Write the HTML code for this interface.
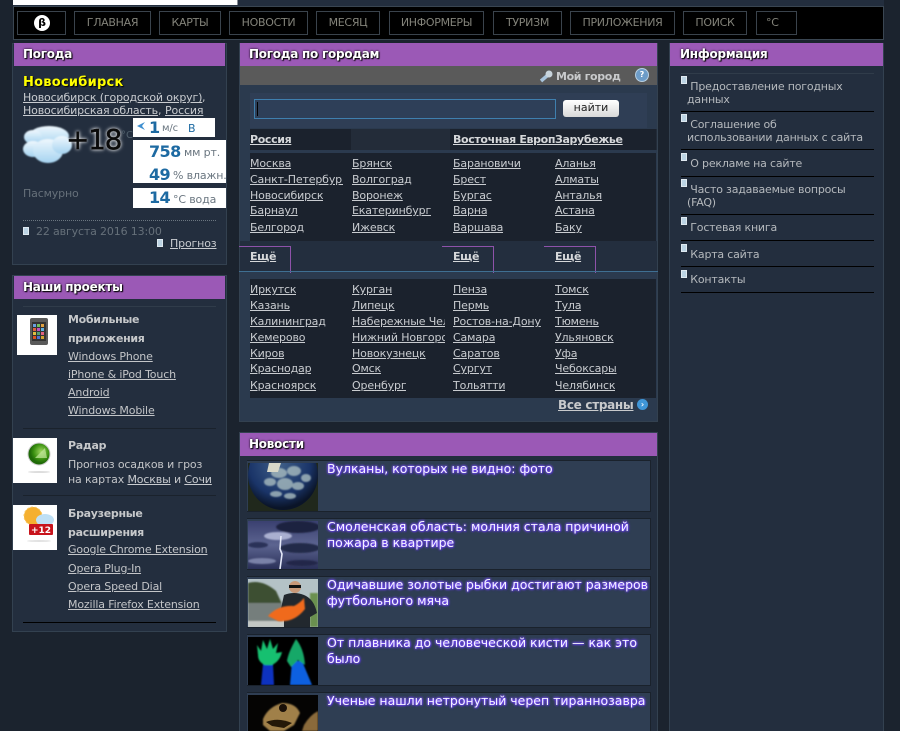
<!DOCTYPE html>
<html lang="ru"><head><meta charset="utf-8"><title>Погода</title>
<style>
html,body{margin:0;padding:0;width:900px;height:731px;overflow:hidden;background:#1b232e;}
body{position:relative;font-family:"DejaVu Sans",sans-serif;font-size:11px;color:#b9bcc0;}
div,span,a,svg{position:absolute;white-space:nowrap;}
a{color:#c9ccd0;text-decoration:underline;}
a.c{font-size:11px;letter-spacing:-.15px;line-height:16px;overflow:hidden;}
.panel{background:#232e3e;border:1px solid #334150;box-sizing:border-box;}
.h{background:#9b59b6;height:23px;color:#fff;font-weight:bold;font-size:12px;line-height:22px;padding-left:9px;box-sizing:border-box;text-shadow:1px 1px 1px #000,0 0 2px #000;letter-spacing:-.25px;}
.nav{background:#000;border:1px solid #3a434c;box-sizing:border-box;height:24px;top:11px;color:#83837a;font-size:11px;line-height:21px;text-align:center;letter-spacing:-.3px;}
.t{color:#1d6aa2;font-weight:bold;font-size:16px;letter-spacing:-.6px;}
.w{background:#fff;}
.u{color:#6a7680;font-size:11px;letter-spacing:-.15px;}
.m{width:6px;height:8px;background:#bcd4e4;border:1px solid #dfe9f0;box-sizing:border-box;}
.tab{width:52px;height:27px;top:246px;border-top:1px solid #8e52aa;border-right:1px solid #8e52aa;box-sizing:border-box;}
.hd{font-weight:bold;color:#d6d8da;text-decoration:underline;font-size:11px;letter-spacing:-.35px;}
.news{left:247px;width:404px;height:52px;background:#2f3e53;border-bottom:1px solid #1a222c;border-top:1px solid #1a222c;border-right:1px solid #1a222c;box-sizing:border-box;}
.nt{left:327px;color:#f4f2ff;font-size:12.5px;line-height:16px;letter-spacing:0;text-shadow:0 0 3px #7a4dff,0 0 2px #7a4dff,0 0 2px #7a4dff,1px 1px 1px #2a2a80;}
.l{height:1px;background:#000;}
.info{left:691px;color:#b5b9bd;font-size:11px;letter-spacing:-.2px;line-height:13px;}
.p{color:#c3c5c8;font-size:11px;letter-spacing:-.15px;}
.pb{font-weight:bold;color:#c6c8ca;font-size:11px;letter-spacing:-.3px;}
</style></head><body>

<div style="left:13px;top:0;width:871px;height:6px;background:#232e3e"></div>
<div style="left:13px;top:0;width:224px;height:5px;background:#fff"></div>
<div style="left:237px;top:0;width:1px;height:5px;background:#8a8f96"></div>
<div style="left:13px;top:6px;width:871px;height:34px;background:#000;border:1px solid #3a4652;box-sizing:border-box"></div>
<div class="nav" style="left:17px;width:49px"></div>
<div style="left:34px;top:15px;width:16px;height:16px;border-radius:50%;background:#fff;color:#000;font-size:11px;font-weight:bold;line-height:16px;text-align:center">β</div>
<div class="nav" style="left:74px;width:77px">ГЛАВНАЯ</div>
<div class="nav" style="left:159px;width:62px">КАРТЫ</div>
<div class="nav" style="left:229px;width:79px">НОВОСТИ</div>
<div class="nav" style="left:316px;width:64px">МЕСЯЦ</div>
<div class="nav" style="left:389px;width:95px">ИНФОРМЕРЫ</div>
<div class="nav" style="left:493px;width:69px">ТУРИЗМ</div>
<div class="nav" style="left:570px;width:105px">ПРИЛОЖЕНИЯ</div>
<div class="nav" style="left:683px;width:64px">ПОИСК</div>
<div class="nav" style="left:756px;width:41px;text-align:left;padding-left:9px">°C</div>

<!-- Weather panel -->
<div class="panel" style="left:12px;top:43px;width:215px;height:222px"></div>
<div class="h" style="left:14px;top:43px;width:211px">Погода</div>
<div style="left:23px;top:75px;color:#ff0;font-weight:bold;font-size:13px;letter-spacing:.25px;text-shadow:1px 1px 1px #000">Новосибирск</div>
<a style="left:23px;top:91px;font-size:11px;letter-spacing:-.15px">Новосибирск (городской округ)</a><span style="left:202px;top:91px">,</span>
<a style="left:23px;top:104px;font-size:11px;letter-spacing:-.15px">Новосибирская область</a><span style="left:158px;top:104px">,</span>
<a style="left:165px;top:104px;font-size:11px;letter-spacing:-.15px">Россия</a>
<svg style="left:22px;top:124px" width="52" height="42" viewBox="0 0 52 42"><defs><linearGradient id="cl" x1="0" y1="0" x2="0" y2="1"><stop offset="0" stop-color="#eef7fd"/><stop offset="1" stop-color="#a5d3f0"/></linearGradient><filter id="b1"><feGaussianBlur stdDeviation=".7"/></filter></defs><g fill="url(#cl)" filter="url(#b1)"><ellipse cx="27" cy="12" rx="20" ry="10"/><ellipse cx="11" cy="13" rx="9" ry="7"/><ellipse cx="11" cy="25" rx="10" ry="8"/><ellipse cx="26" cy="27" rx="15" ry="12"/><ellipse cx="40" cy="21" rx="10" ry="9"/></g></svg>
<div style="left:66px;top:119px;color:#0a0a0a;font-size:28px;line-height:42px;letter-spacing:-1.3px;-webkit-text-stroke:.4px #0a0a0a;text-shadow:0 0 3px #fff,0 0 5px rgba(255,255,255,.7)">+18</div>
<div style="left:121px;top:130px;color:#51606c;font-size:10px">°C</div>
<div class="w" style="left:133px;top:118px;width:82px;height:19px"></div>
<svg style="left:137px;top:122px" width="9" height="9"><path d="M0 4 L8 0 L5 4 L8 8 Z" fill="#3f8fd0"/></svg>
<div class="t" style="left:149px;top:118px;line-height:20px">1</div>
<div class="u" style="left:162px;top:123px;font-size:10px">м/с</div>
<div style="left:188px;top:122px;color:#1d6aa2;font-size:11px">В</div>
<div class="w" style="left:133px;top:140px;width:93px;height:43px"></div>
<div class="t" style="left:149px;top:142px;line-height:20px">758</div>
<div class="u" style="left:184px;top:146px">мм рт.</div>
<div class="t" style="left:149px;top:165px;line-height:20px">49</div>
<div class="u" style="left:173px;top:169px">% влажн.</div>
<div class="w" style="left:133px;top:188px;width:93px;height:20px"></div>
<div class="t" style="left:149px;top:188px;line-height:20px">14</div>
<div class="u" style="left:173px;top:193px">°C вода</div>
<div style="left:23px;top:187px;color:#66707a;font-size:11px;letter-spacing:-.15px">Пасмурно</div>
<div style="left:23px;top:220px;width:193px;border-top:1px dotted #6b7680"></div>
<div class="m" style="left:23px;top:227px"></div>
<div style="left:36px;top:225px;color:#66707a;font-size:11px;letter-spacing:-.15px">22 августа 2016 13:00</div>
<div class="m" style="left:157px;top:239px"></div>
<a style="left:170px;top:237px;font-size:11px;letter-spacing:-.15px">Прогноз</a>

<!-- Projects -->
<div class="panel" style="left:12px;top:275px;width:215px;height:357px"></div>
<div class="h" style="left:14px;top:276px;width:211px">Наши проекты</div>
<div class="l" style="left:23px;top:306px;width:193px;background:#303c4a"></div>
<div class="w" style="left:17px;top:315px;width:40px;height:40px"></div>
<svg style="left:17px;top:315px" width="40" height="40"><rect x="13" y="3" width="18" height="27" rx="2" fill="#5a5a5a"/><rect x="15" y="7" width="14" height="19" fill="#333"/><g><rect x="16" y="9" width="3" height="3" fill="#6aa0e0"/><rect x="20" y="9" width="3" height="3" fill="#70c060"/><rect x="24" y="9" width="3" height="3" fill="#e0a040"/><rect x="16" y="13" width="3" height="3" fill="#e06040"/><rect x="20" y="13" width="3" height="3" fill="#c050c0"/><rect x="24" y="13" width="3" height="3" fill="#60b0e0"/><rect x="16" y="17" width="3" height="3" fill="#e0c040"/><rect x="20" y="17" width="3" height="3" fill="#50a070"/><rect x="24" y="17" width="3" height="3" fill="#e06080"/><rect x="16" y="21" width="3" height="3" fill="#e05020"/><rect x="20" y="21" width="3" height="3" fill="#5070d0"/><rect x="24" y="21" width="3" height="3" fill="#d0a030"/></g></svg>
<div class="pb" style="left:68px;top:313px">Мобильные</div>
<div class="pb" style="left:68px;top:332px">приложения</div>
<a class="p" style="left:68px;top:350px">Windows Phone</a>
<a class="p" style="left:68px;top:368px">iPhone &amp; iPod Touch</a>
<a class="p" style="left:68px;top:386px">Android</a>
<a class="p" style="left:68px;top:404px">Windows Mobile</a>
<div class="l" style="left:23px;top:428px;width:193px;background:#1a222c"></div>
<div class="w" style="left:13px;top:438px;width:44px;height:45px"></div>
<svg style="left:13px;top:438px" width="44" height="45"><defs><radialGradient id="gr" cx=".6" cy=".4"><stop offset="0" stop-color="#a0d860"/><stop offset=".7" stop-color="#3a9010"/><stop offset="1" stop-color="#1f6a08"/></radialGradient></defs><circle cx="26" cy="16" r="11" fill="url(#gr)" stroke="#ccc"/><path d="M22 20 L32 10 L34 20Z" fill="#c4e8a0" opacity=".7"/><ellipse cx="26" cy="34" rx="11" ry="1" fill="#ddd"/></svg>
<div class="pb" style="left:68px;top:439px">Радар</div>
<div class="p" style="left:68px;top:458px">Прогноз осадков и гроз</div>
<div class="p" style="left:68px;top:473px">на картах <a style="position:static">Москвы</a> и <a style="position:static">Сочи</a></div>
<div class="l" style="left:23px;top:495px;width:193px;background:#1a222c"></div>
<div class="w" style="left:13px;top:505px;width:44px;height:45px"></div>
<svg style="left:13px;top:505px" width="44" height="45"><circle cx="20" cy="11" r="9" fill="#f5b030" stroke="#f8c860" stroke-dasharray="2 2"/><ellipse cx="32" cy="15" rx="9" ry="6" fill="#bfe0f5"/><rect x="16" y="19" width="24" height="11" rx="1" fill="#c8141c"/><text x="28" y="28" font-family="DejaVu Sans" font-size="9" font-weight="bold" fill="#fff" text-anchor="middle">+12</text><ellipse cx="26" cy="36" rx="12" ry="1" fill="#e2e2e2"/></svg>
<div class="pb" style="left:68px;top:507px">Браузерные</div>
<div class="pb" style="left:68px;top:526px">расширения</div>
<a class="p" style="left:68px;top:543px">Google Chrome Extension</a>
<a class="p" style="left:68px;top:562px">Opera Plug-In</a>
<a class="p" style="left:68px;top:580px">Opera Speed Dial</a>
<a class="p" style="left:68px;top:598px">Mozilla Firefox Extension</a>
<div class="l" style="left:23px;top:622px;width:193px"></div>

<!-- Cities -->
<div class="panel" style="left:239px;top:43px;width:419px;height:379px;background:#2b3a4e"></div>
<div class="h" style="left:240px;top:43px;width:417px">Погода по городам</div>
<div style="left:240px;top:66px;width:417px;height:19px;background:#5a5a5a"></div>
<svg style="left:539px;top:69px" width="15" height="15"><path d="M2 12 L9 6" stroke="#a8c4dc" stroke-width="3.5" fill="none"/><circle cx="10" cy="5" r="3.5" fill="#c8d4dc"/></svg>
<div style="left:556px;top:70px;color:#c8cacc;font-weight:bold;font-size:11px;letter-spacing:-.35px">Мой город</div>
<div style="left:635px;top:68px;width:12px;height:12px;border-radius:50%;background:#6d9cc8;border:1px solid #b8cfe2;color:#fff;font-size:8px;line-height:12px;text-align:center;font-weight:bold">?</div>
<div style="left:250px;top:93px;width:397px;height:35px;background:#2f3e55"></div>
<div style="left:254px;top:99px;width:302px;height:20px;background:#2e3f58;border:1px solid #3f7fae;box-sizing:border-box"></div>
<div style="left:257px;top:102px;width:1px;height:14px;background:#000"></div>
<div style="left:563px;top:100px;width:56px;height:17px;background:linear-gradient(#fff,#d8d8d8);border-radius:3px;color:#222;font-size:11px;line-height:16px;text-align:center">найти</div>

<div style="left:250px;top:129px;width:101px;height:21px;background:#1b222d"></div>
<div style="left:351px;top:129px;width:306px;height:21px;background:#232c39"></div>
<div style="left:450px;top:129px;width:206px;height:21px;background:#1b222d"></div>
<div style="left:250px;top:153px;width:406px;height:88px;background:#1b222d"></div>
<a class="hd" style="left:250px;top:133px">Россия</a>
<a class="hd" style="left:453px;top:133px;width:102px;overflow:hidden">Восточная Европа</a>
<a class="hd" style="left:555px;top:133px">Зарубежье</a>

<a class="c" style="left:250px;top:156px">Москва</a>
<a class="c" style="left:250px;top:172px;width:93px">Санкт-Петербург</a>
<a class="c" style="left:250px;top:188px">Новосибирск</a>
<a class="c" style="left:250px;top:203px">Барнаул</a>
<a class="c" style="left:250px;top:220px">Белгород</a>
<a class="c" style="left:352px;top:156px">Брянск</a>
<a class="c" style="left:352px;top:172px">Волгоград</a>
<a class="c" style="left:352px;top:188px">Воронеж</a>
<a class="c" style="left:352px;top:203px">Екатеринбург</a>
<a class="c" style="left:352px;top:220px">Ижевск</a>
<a class="c" style="left:453px;top:156px">Барановичи</a>
<a class="c" style="left:453px;top:172px">Брест</a>
<a class="c" style="left:453px;top:188px">Бургас</a>
<a class="c" style="left:453px;top:203px">Варна</a>
<a class="c" style="left:453px;top:220px">Варшава</a>
<a class="c" style="left:555px;top:156px">Аланья</a>
<a class="c" style="left:555px;top:172px">Алматы</a>
<a class="c" style="left:555px;top:188px">Анталья</a>
<a class="c" style="left:555px;top:203px">Астана</a>
<a class="c" style="left:555px;top:220px">Баку</a>

<div style="left:240px;top:241px;width:417px;height:31px;background:#232e3e"></div>
<div class="tab" style="left:239px"></div>
<div class="tab" style="left:442px"></div>
<div class="tab" style="left:544px"></div>
<a class="hd" style="left:250px;top:250px">Ещё</a>
<a class="hd" style="left:453px;top:250px">Ещё</a>
<a class="hd" style="left:555px;top:250px">Ещё</a>
<div style="left:239px;top:271px;width:419px;height:1px;background:#3f6f92"></div>
<div style="left:250px;top:279px;width:406px;height:119px;background:#1b222d"></div>

<a class="c" style="left:250px;top:282px">Иркутск</a>
<a class="c" style="left:250px;top:298px">Казань</a>
<a class="c" style="left:250px;top:314px">Калининград</a>
<a class="c" style="left:250px;top:330px">Кемерово</a>
<a class="c" style="left:250px;top:346px">Киров</a>
<a class="c" style="left:250px;top:361px">Краснодар</a>
<a class="c" style="left:250px;top:378px">Красноярск</a>
<a class="c" style="left:352px;top:282px">Курган</a>
<a class="c" style="left:352px;top:298px">Липецк</a>
<a class="c" style="left:352px;top:314px;width:93px">Набережные Челны</a>
<a class="c" style="left:352px;top:330px;width:93px">Нижний Новгород</a>
<a class="c" style="left:352px;top:346px">Новокузнецк</a>
<a class="c" style="left:352px;top:361px">Омск</a>
<a class="c" style="left:352px;top:378px">Оренбург</a>
<a class="c" style="left:453px;top:282px">Пенза</a>
<a class="c" style="left:453px;top:298px">Пермь</a>
<a class="c" style="left:453px;top:314px">Ростов-на-Дону</a>
<a class="c" style="left:453px;top:330px">Самара</a>
<a class="c" style="left:453px;top:346px">Саратов</a>
<a class="c" style="left:453px;top:361px">Сургут</a>
<a class="c" style="left:453px;top:378px">Тольятти</a>
<a class="c" style="left:555px;top:282px">Томск</a>
<a class="c" style="left:555px;top:298px">Тула</a>
<a class="c" style="left:555px;top:314px">Тюмень</a>
<a class="c" style="left:555px;top:330px">Ульяновск</a>
<a class="c" style="left:555px;top:346px">Уфа</a>
<a class="c" style="left:555px;top:361px">Чебоксары</a>
<a class="c" style="left:555px;top:378px">Челябинск</a>
<a style="left:558px;top:398px;font-weight:bold;font-size:12px;letter-spacing:-.3px;color:#c8cacc">Все страны</a>
<div style="left:637px;top:399px;width:11px;height:11px;border-radius:50%;background:#3f96d8;color:#fff;font-size:8px;line-height:11px;text-align:center;font-weight:bold">›</div>

<!-- News -->
<div class="panel" style="left:239px;top:432px;width:419px;height:300px"></div>
<div class="h" style="left:240px;top:433px;width:417px">Новости</div>

<div class="news" style="top:460px"></div>
<svg style="left:248px;top:463px" width="70" height="48"><defs><radialGradient id="vb" cx=".45" cy=".35" r=".62"><stop offset="0" stop-color="#3f5f88"/><stop offset=".7" stop-color="#1a3468"/><stop offset="1" stop-color="#0a1428"/></radialGradient><filter id="b2"><feGaussianBlur stdDeviation=".8"/></filter></defs><rect width="70" height="48" fill="#20281c"/><circle cx="35" cy="12" r="35" fill="url(#vb)"/><g fill="#a8bcc0" opacity=".8" filter="url(#b2)"><ellipse cx="31" cy="10" rx="8" ry="5"/><ellipse cx="46" cy="8" rx="7" ry="5"/><ellipse cx="58" cy="15" rx="5" ry="4"/><ellipse cx="22" cy="19" rx="6" ry="4"/><ellipse cx="37" cy="21" rx="8" ry="6"/><ellipse cx="50" cy="23" rx="6" ry="4"/><ellipse cx="28" cy="31" rx="6" ry="3"/><ellipse cx="42" cy="33" rx="6" ry="3"/></g><path d="M21 0h12l-3 9h-11z" fill="#d8d8c8"/></svg>
<div class="nt" style="top:461px">Вулканы, которых не видно: фото</div>

<div class="news" style="top:518px"></div>
<svg style="left:248px;top:521px" width="70" height="48"><defs><linearGradient id="st" x1="0" y1="0" x2="0" y2="1"><stop offset="0" stop-color="#3a4070"/><stop offset=".5" stop-color="#5c6490"/><stop offset="1" stop-color="#2a3058"/></linearGradient></defs><rect width="70" height="48" fill="url(#st)"/><g filter="url(#b2)"><ellipse cx="50" cy="6" rx="22" ry="6" fill="#1f2440"/><ellipse cx="52" cy="27" rx="20" ry="5" fill="#242a4a"/><ellipse cx="10" cy="24" rx="10" ry="3" fill="#2a3058"/><ellipse cx="14" cy="40" rx="14" ry="3" fill="#7a82a8"/><ellipse cx="54" cy="42" rx="16" ry="3" fill="#232848"/><ellipse cx="30" cy="15" rx="14" ry="4" fill="#aab0d0"/></g><path d="M33 15 L32 28 L34 33 L32 48" stroke="#e4e8f8" stroke-width="1.6" fill="none"/></svg>
<div class="nt" style="top:519px">Смоленская область: молния стала причиной<br>пожара в квартире</div>

<div class="news" style="top:576px"></div>
<svg style="left:248px;top:579px" width="70" height="48"><rect width="70" height="48" fill="#b4c2c6"/><g filter="url(#b2)"><path d="M0 4 Q14 0 28 12 L34 25 H0Z" fill="#3c5030"/><rect y="24" width="34" height="18" fill="#747e7c"/><rect y="42" width="36" height="6" fill="#c4c8c4"/><rect x="62" y="14" width="8" height="34" fill="#6a9050"/></g><path d="M36 16 Q46 12 56 16 Q66 20 69 34 L62 38 V48 H36 V38 L32 34Z" fill="#22282e"/><circle cx="47" cy="8" r="6" fill="#c89878"/><rect x="41" y="6" width="12" height="3" fill="#111"/><path d="M20 37 Q30 26 46 27 Q52 24 56 19 L57 30 Q46 44 30 42 Z" fill="#f06a1c" filter="url(#b2)"/></svg>
<div class="nt" style="top:577px">Одичавшие золотые рыбки достигают размеров<br>футбольного мяча</div>

<div class="news" style="top:634px"></div>
<svg style="left:248px;top:637px" width="70" height="48"><rect width="70" height="48" fill="#000"/><g filter="url(#b2)"><path d="M15 27 h10 l1 21 h-13z" fill="#1030c0"/><path d="M10 18 L9 8 L13 14 L15 3 L19 12 L22 2 L25 12 L30 6 L28 16 L34 15 Q32 24 24 28 L17 28 Q10 25 10 18Z" fill="#18c070"/><path d="M44 24 L54 24 L64 48 L42 48Z" fill="#1060e0"/><path d="M48 2 Q40 16 39 24 L43 30 L50 23 L57 28 Q56 12 48 2Z" fill="#18a868"/></g></svg>
<div class="nt" style="top:635px">От плавника до человеческой кисти — как это<br>было</div>

<div class="news" style="top:692px;height:39px;border-bottom:0"></div>
<svg style="left:248px;top:695px" width="70" height="36"><rect width="70" height="36" fill="#050403"/><path d="M15 24 Q20 12 34 8 Q48 8 52 18 L46 30 L36 36 H22 L15 30Z" fill="#a08048" filter="url(#b2)"/><circle cx="35" cy="13" r="4" fill="#1a1008"/><path d="M18 27 Q30 22 44 28 L36 33 L24 31Z" fill="#241808"/><path d="M56 30 Q62 20 70 16 V36 H54Z" fill="#8a6a3a" filter="url(#b2)"/></svg>
<div class="nt" style="top:693px">Ученые нашли нетронутый череп тираннозавра</div>

<!-- Info -->
<div class="panel" style="left:669px;top:43px;width:215px;height:690px"></div>
<div class="h" style="left:670px;top:43px;width:213px;padding-left:10px">Информация</div>
<div class="l" style="left:681px;top:73px;width:193px;background:#303c4a"></div>
<div class="m" style="left:681px;top:76px"></div>
<div class="info" style="left:687px;top:80px;white-space:pre"> Предоставление погодных
данных</div>
<div class="l" style="left:681px;top:111px;width:193px"></div>
<div class="m" style="left:681px;top:114px"></div>
<div class="info" style="left:687px;top:118px;white-space:pre"> Соглашение об
использовании данных с сайта</div>
<div class="l" style="left:681px;top:149px;width:193px"></div>
<div class="m" style="left:681px;top:153px"></div>
<div class="info" style="left:687px;top:157px;white-space:pre"> О рекламе на сайте</div>
<div class="l" style="left:681px;top:176px;width:193px"></div>
<div class="m" style="left:681px;top:179px"></div>
<div class="info" style="left:687px;top:183px;white-space:pre"> Часто задаваемые вопросы
(FAQ)</div>
<div class="l" style="left:681px;top:214px;width:193px"></div>
<div class="m" style="left:681px;top:217px"></div>
<div class="info" style="left:687px;top:221px;white-space:pre"> Гостевая книга</div>
<div class="l" style="left:681px;top:240px;width:193px"></div>
<div class="m" style="left:681px;top:244px"></div>
<div class="info" style="left:687px;top:248px;white-space:pre"> Карта сайта</div>
<div class="l" style="left:681px;top:266px;width:193px"></div>
<div class="m" style="left:681px;top:270px"></div>
<div class="info" style="left:687px;top:273px;white-space:pre"> Контакты</div>
<div class="l" style="left:681px;top:292px;width:193px"></div>

</body></html>
